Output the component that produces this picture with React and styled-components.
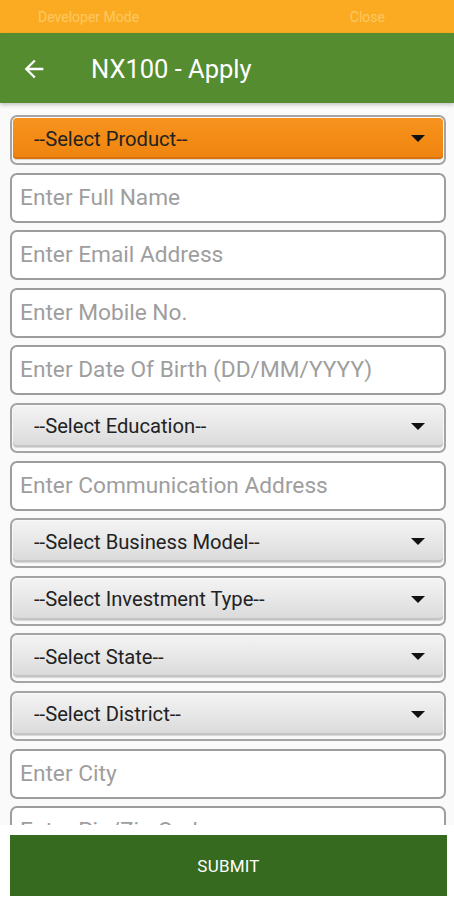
import styled, { createGlobalStyle } from "styled-components";

const GlobalStyle = createGlobalStyle`
  html, body {
    margin: 0;
    padding: 0;
    background: #fafafa;
    font-family: Roboto, "Liberation Sans", sans-serif;
  }
  * {
    box-sizing: border-box;
  }
`;

const Screen = styled.div`
  width: 454px;
  height: 900px;
  display: flex;
  flex-direction: column;
  background: #fafafa;
  overflow: hidden;
`;

const DevBar = styled.div`
  height: 33px;
  background: #fbab22;
  display: flex;
  align-items: center;
  justify-content: space-between;
  padding: 0 69px 0 38px;
  font-size: 14px;
  color: #fdc863;
  flex-shrink: 0;
`;

const Header = styled.div`
  height: 70px;
  background: #558c2f;
  display: flex;
  align-items: center;
  color: #fff;
  box-shadow: 0 2px 4px rgba(0, 0, 0, 0.22);
  flex-shrink: 0;
  position: relative;
  z-index: 1;
`;

const BackButton = styled.div`
  width: 70px;
  display: flex;
  justify-content: center;
  padding: 2px 3px 0 0;
`;

const Title = styled.div`
  margin-left: 21px;
  font-size: 25.5px;
  padding-top: 2px;
`;

const Form = styled.div`
  flex: 1;
  display: flex;
  flex-direction: column;
  gap: 7.6px;
  padding: 12px 8px 0 10px;
  overflow: hidden;
`;

const InputBox = styled.div`
  height: 50px;
  border: 2px solid #9d9d9d;
  border-radius: 7px;
  background: #fff;
  display: flex;
  align-items: center;
  padding: 0 0 1px 8px;
  font-size: 22.7px;
  color: #9e9e9e;
  flex-shrink: 0;
  white-space: nowrap;
`;

const SelectBox = styled.div`
  height: 50px;
  border: 2px solid #a4a4a4;
  border-radius: 7px;
  padding: 1px 1px 4px;
  background: #fafafa;
  flex-shrink: 0;
  display: flex;
`;

const SelectInner = styled.div`
  flex: 1;
  border-radius: 4px;
  display: flex;
  align-items: center;
  justify-content: space-between;
  padding: 0 18px 0 21px;
  font-size: 20.2px;
  color: #222;
  background: ${({ $orange }) =>
    $orange
      ? "linear-gradient(180deg, #f7941f 0%, #f28a14 60%, #ef8410 100%)"
      : "linear-gradient(180deg, #f3f3f3 0%, #e6e6e6 55%, #d9d9d9 100%)"};
  box-shadow: inset 0 -2px 0 ${({ $orange }) => ($orange ? "#d97208" : "#c4c4c4")},
    0 1px 1px rgba(0, 0, 0, 0.15);
`;

const Caret = styled.span`
  width: 0;
  height: 0;
  border-left: 7px solid transparent;
  border-right: 7px solid transparent;
  border-top: 7px solid #111;
`;

const Footer = styled.div`
  background: #fff;
  padding: 10px 7px 4px 10px;
  flex-shrink: 0;
`;

const SubmitButton = styled.button`
  width: 100%;
  height: 61px;
  border: none;
  background: #366a1f;
  color: #fff;
  font-family: Roboto, "Liberation Sans", sans-serif;
  font-size: 17px;
  letter-spacing: 0.2px;
`;

const fields = [
  { type: "select", label: "--Select Product--", orange: true },
  { type: "input", label: "Enter Full Name" },
  { type: "input", label: "Enter Email Address" },
  { type: "input", label: "Enter Mobile No." },
  { type: "input", label: "Enter Date Of Birth (DD/MM/YYYY)" },
  { type: "select", label: "--Select Education--" },
  { type: "input", label: "Enter Communication Address" },
  { type: "select", label: "--Select Business Model--" },
  { type: "select", label: "--Select Investment Type--" },
  { type: "select", label: "--Select State--" },
  { type: "select", label: "--Select District--" },
  { type: "input", label: "Enter City" },
  { type: "input", label: "Enter Pin/Zip Code" },
];

export default function App() {
  return (
    <Screen>
      <GlobalStyle />
      <DevBar>
        <span>Developer Mode</span>
        <span>Close</span>
      </DevBar>
      <Header>
        <BackButton>
          <svg width="28" height="28" viewBox="0 0 24 24">
            <path
              d="M20 11H7.83l5.59-5.59L12 4l-8 8 8 8 1.41-1.41L7.83 13H20v-2z"
              fill="#fff"
            />
          </svg>
        </BackButton>
        <Title>NX100 - Apply</Title>
      </Header>
      <Form>
        {fields.map((f) =>
          f.type === "select" ? (
            <SelectBox key={f.label}>
              <SelectInner $orange={f.orange}>
                <span>{f.label}</span>
                <Caret />
              </SelectInner>
            </SelectBox>
          ) : (
            <InputBox key={f.label}>{f.label}</InputBox>
          )
        )}
      </Form>
      <Footer>
        <SubmitButton>SUBMIT</SubmitButton>
      </Footer>
    </Screen>
  );
}
